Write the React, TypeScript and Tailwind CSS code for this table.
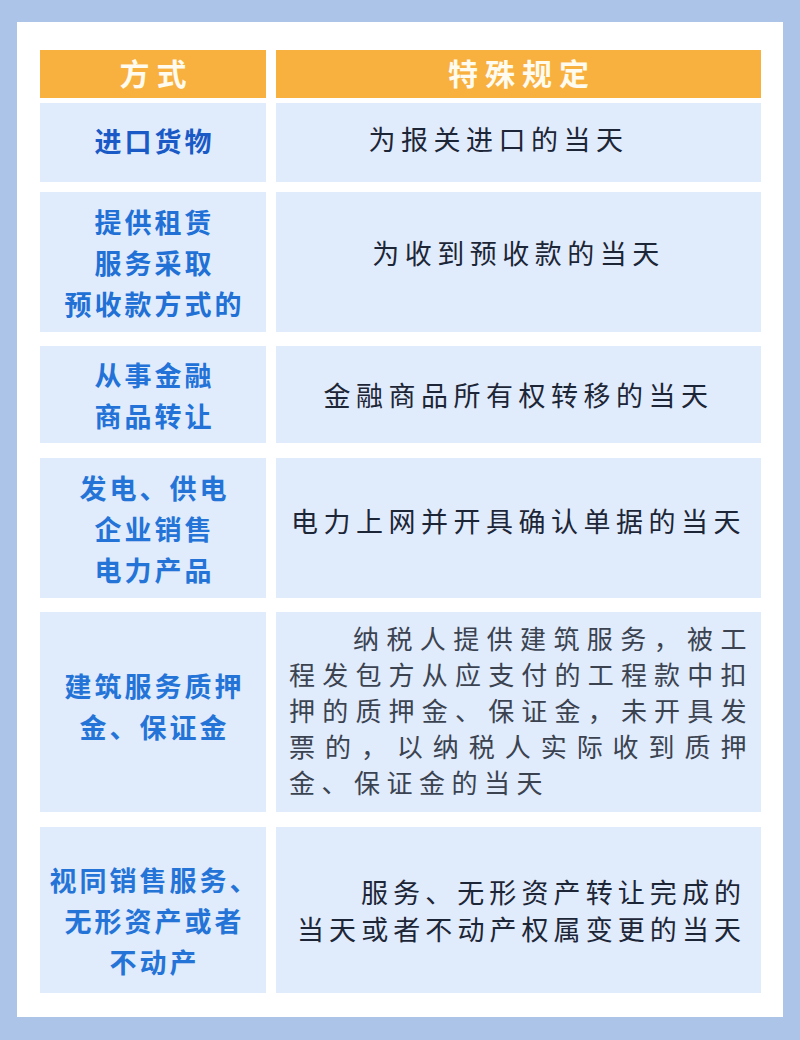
import React from 'react';

type Row = {
  left: string[];
  leftColor: string;
  rowClass: string;
  leftPad?: string;
  right: React.ReactNode;
};

const font = { fontFamily: '"Noto Sans CJK SC", "Noto Sans", sans-serif' };

const Plain = ({ text, pad = '' }: { text: string; pad?: string }) => (
  <div className={`flex h-full items-center justify-center bg-[#e0ebfc] ${pad}`}>
    <p className="text-[27px] leading-[37px] tracking-[5.5px] text-[#1c2636]">{text}</p>
  </div>
);

const rows: Row[] = [
  {
    left: ['进口货物'],
    leftColor: 'text-[#1a5ac6]',
    rowClass: 'mt-[6px] h-[79px]',
    leftPad: 'pb-[5px]',
    right: <Plain text="为报关进口的当天" pad="pr-[40px] pb-[8px]" />,
  },
  {
    left: ['提供租赁', '服务采取', '预收款方式的'],
    leftColor: 'text-[#2170d6]',
    rowClass: 'mt-[10px] h-[140px]',
    right: <Plain text="为收到预收款的当天" pad="pb-[20px]" />,
  },
  {
    left: ['从事金融', '商品转让'],
    leftColor: 'text-[#2272d8]',
    rowClass: 'mt-[14px] h-[97px]',
    right: <Plain text="金融商品所有权转移的当天" />,
  },
  {
    left: ['发电、供电', '企业销售', '电力产品'],
    leftColor: 'text-[#2474d8]',
    rowClass: 'mt-[15px] h-[140px]',
    right: <Plain text="电力上网并开具确认单据的当天" pad="pb-[16px]" />,
  },
  {
    left: ['建筑服务质押', '金、保证金'],
    leftColor: 'text-[#2474d8]',
    rowClass: 'mt-[14px] h-[200px]',
    leftPad: 'pb-[12px]',
    right: (
      <div className="flex h-full flex-col justify-center bg-[#e0ebfc] pl-[13px] pr-[8px] pb-[4px] text-[26px] leading-[36px] tracking-[6.5px] text-[#3b4350]">
        <p className="pl-[64px] text-justify [text-align-last:justify]">纳税人提供建筑服务，被工</p>
        <p className="text-justify [text-align-last:justify]">程发包方从应支付的工程款中扣</p>
        <p className="text-justify [text-align-last:justify]">押的质押金、保证金，未开具发</p>
        <p className="text-justify [text-align-last:justify]">票的，以纳税人实际收到质押</p>
        <p>金、保证金的当天</p>
      </div>
    ),
  },
  {
    left: ['视同销售服务、', '无形资产或者', '不动产'],
    leftColor: 'text-[#2474d8]',
    rowClass: 'mt-[15px] h-[166px]',
    leftPad: 'pt-[20px]',
    right: (
      <div className="flex h-full flex-col justify-center bg-[#e0ebfc] pl-[21px] pr-[15px] text-[27px] leading-[37px] tracking-[5px] text-[#1c2636]">
        <p className="pl-[64px] text-justify [text-align-last:justify]">服务、无形资产转让完成的</p>
        <p className="text-justify [text-align-last:justify]">当天或者不动产权属变更的当天</p>
      </div>
    ),
  },
];

export default function App() {
  return (
    <div className="h-[1040px] w-[800px] bg-[#abc4e7] px-[17px] pt-[22px]" style={font}>
      <div className="flex h-[995px] flex-col bg-white pl-[23px] pr-[22px] pt-[28px]">
        {/* Header */}
        <div className="grid h-[47px] grid-cols-[226px_485px] gap-x-[10px]">
          <div className="flex items-center justify-center bg-[#f8b03f] pb-[3px] pl-[7px] text-[30px] font-bold tracking-[7px] text-[#fffbef]">
            方式
          </div>
          <div className="flex items-center justify-center bg-[#f8b03f] pb-[3px] pl-[7px] text-[30px] font-bold tracking-[7px] text-[#fffbef]">
            特殊规定
          </div>
        </div>

        {rows.map((row, i) => (
          <div key={i} className={`grid grid-cols-[226px_485px] gap-x-[10px] ${row.rowClass}`}>
            <div
              className={`flex flex-col items-center justify-center bg-[#e0ebfc] text-[27px] font-bold leading-[41px] tracking-[3px] ${row.leftColor} ${row.leftPad ?? ''}`}
            >
              {row.left.map((line) => (
                <p key={line} className="whitespace-nowrap pl-[3px] text-center">
                  {line}
                </p>
              ))}
            </div>
            {row.right}
          </div>
        ))}
      </div>
    </div>
  );
}
